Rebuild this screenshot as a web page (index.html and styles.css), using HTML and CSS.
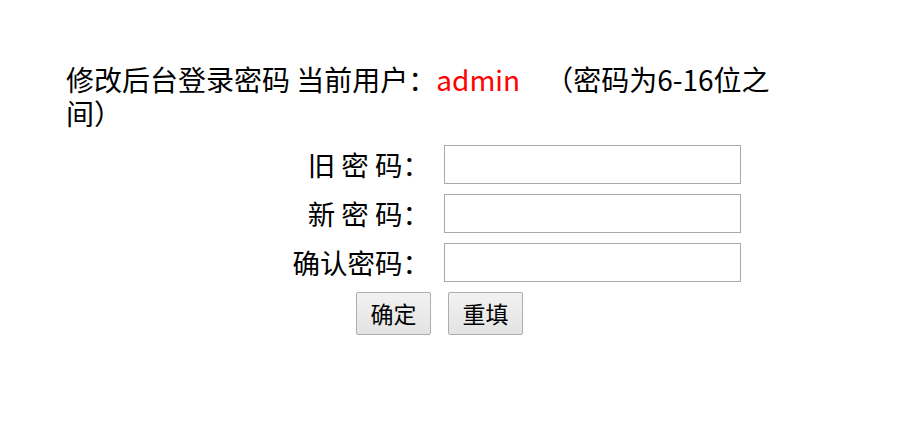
FILE: index.html
```html
<!DOCTYPE html>
<html lang="zh-CN">
<head>
  <meta charset="UTF-8" />
  <title>修改后台登录密码</title>
  <link rel="stylesheet" href="styles.css">
</head>
<body>
  <div class="wrap">
    <p class="title">修改后台登录密码 当前用户：<span class="user">admin</span>&nbsp;&nbsp;&nbsp;&nbsp;（密码为6-16位之间）</p>

    <form class="pwd-form" onsubmit="return false;">
      <div class="row">
        <label for="oldpwd">旧 密 码：</label>
        <input type="password" id="oldpwd">
      </div>
      <div class="row">
        <label for="newpwd">新 密 码：</label>
        <input type="password" id="newpwd">
      </div>
      <div class="row">
        <label for="repwd">确认密码：</label>
        <input type="password" id="repwd">
      </div>
      <div class="buttons">
        <button type="submit">确定</button>
        <button type="reset">重填</button>
      </div>
    </form>
  </div>
</body>
</html>
```

FILE: styles.css
```css
body {
  margin: 0;
  font-family: "Noto Sans CJK SC", "Noto Sans", sans-serif;
  color: #000;
  background: #fff;
}
.wrap {
  width: 714px;
  margin-left: 66px;
  padding-top: 62px;
}
.title {
  margin: 0;
  font-size: 28px;
  line-height: 34px;
}
.user {
  color: #ff0000;
}
.pwd-form {
  margin-top: 15px;
}
.row {
  display: flex;
  align-items: center;
  height: 39px;
  margin-bottom: 10px;
}
.row label {
  width: 364px;
  text-align: right;
  font-size: 27.5px;
  line-height: 39px;
  margin-right: 14px;
}
.row input {
  width: 297px;
  height: 39px;
  box-sizing: border-box;
  border: 1px solid #a9a9a9;
  padding: 2px 4px;
  font-size: 16px;
  margin: 0;
}
.buttons {
  display: flex;
  gap: 17px;
  padding-left: 290px;
}
.buttons button {
  width: 75px;
  height: 43px;
  box-sizing: border-box;
  font-family: inherit;
  font-size: 23px;
  line-height: 41px;
  border: 1px solid #adadad;
  border-radius: 2px;
  background: linear-gradient(#f2f2f2, #e3e3e3);
  padding: 0;
  color: #000;
}
```
